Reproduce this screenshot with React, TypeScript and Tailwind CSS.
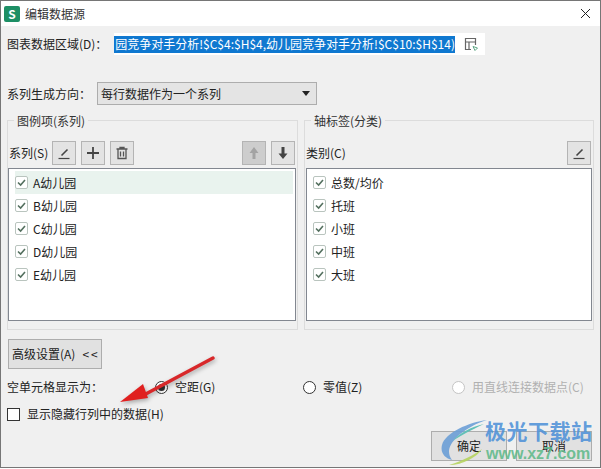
import React from "react";

const font = { fontFamily: '"Noto Sans CJK SC", "Liberation Sans", sans-serif' };

function Pencil() {
  return (
    <svg width="14" height="14" viewBox="0 0 14 14" fill="none" stroke="#444" strokeWidth="1.2">
      <path d="M1.5 12.5h11" />
      <path d="M4.5 9.5 10.5 3.5" strokeWidth="1.6" />
    </svg>
  );
}

function ToolButton({ children, disabled }: { children: React.ReactNode; disabled?: boolean }) {
  return (
    <div className={`flex h-6 w-6 items-center justify-center border border-[#b4b4b4] ${disabled ? "bg-[#cdcdcd]" : "bg-[#e3e3e3]"}`}>
      {children}
    </div>
  );
}

function CheckRow({ label, active }: { label: string; active?: boolean }) {
  return (
    <div className={`ml-[6px] mr-[2px] flex h-[23px] items-center gap-[5px] text-[12px] text-[#222] ${active ? "bg-[#e9f3ee]" : ""}`}>
      <span className="flex h-[13px] w-[13px] items-center justify-center rounded-[2px] border border-[#b9c4be] bg-white">
        <svg width="11" height="11" viewBox="0 0 11 11" fill="none" stroke="#54705f" strokeWidth="1.6">
          <path d="M2 5.5 4.6 8 9 3" />
        </svg>
      </span>
      <span>{label}</span>
    </div>
  );
}

function Radio({ checked, disabled }: { checked?: boolean; disabled?: boolean }) {
  return (
    <span className={`flex h-[13px] w-[13px] items-center justify-center rounded-full border bg-white ${disabled ? "border-[#c4c4c4]" : "border-[#333]"}`}>
      {checked && <span className="h-[7px] w-[7px] rounded-full bg-[#333]" />}
    </span>
  );
}

function Legend({ children }: { children: React.ReactNode }) {
  return (
    <span className="absolute left-[6px] top-[-9px] bg-[#f0f0f0] px-[3px] text-[12px] leading-[17px] text-[#333]">{children}</span>
  );
}

export default function App() {
  return (
    <div style={font} className="relative flex h-[468px] w-[601px] flex-col overflow-hidden border border-[#767676] bg-[#f0f0f0] text-[12px] text-[#222]">
      <div className="flex h-[25px] shrink-0 items-center justify-between bg-white pl-[3px] pr-[9px]">
        <div className="flex items-center gap-[5px]">
          <span className="flex h-4 w-4 items-center justify-center rounded-[2px] bg-[#1d8f65] text-[12px] font-bold leading-none text-white">S</span>
          <span className="text-[12px] text-[#333]">编辑数据源</span>
        </div>
        <svg width="11" height="11" viewBox="0 0 11 11" fill="none" stroke="#222" strokeWidth="1">
          <path d="M1 1l9 9M10 1l-9 9" />
        </svg>
      </div>

      <div className="mt-[7px] flex h-[22px] items-center pl-[6px]">
        <span className="w-[107px] shrink-0 text-[12px]">图表数据区域(D)：</span>
        <div className="flex h-[22px] w-[371px] items-center overflow-hidden bg-white">
          <div className="flex h-[17px] w-[341px] shrink-0 items-center justify-end overflow-hidden whitespace-nowrap bg-[#0f78d0] text-[12px] leading-none text-white">
            园竞争对手分析!$C$4:$H$4,幼儿园竞争对手分析!$C$10:$H$14)
          </div>
          <svg className="ml-[9px]" width="15" height="15" viewBox="0 0 15 15" fill="none" stroke="#666" strokeWidth="1.2">
            <path d="M11.5 8V1.5h-10v11H7" />
            <path d="M1.5 5h10M5 5v7.5" />
            <path d="M9 9.5l4.5 1.5-2.5 2.5z" stroke="#4f9d78" strokeWidth="0.9" />
          </svg>
        </div>
      </div>

      <div className="mt-[27px] flex h-[23px] items-center pl-[6px]">
        <span className="w-[90px] shrink-0 text-[12px]">系列生成方向：</span>
        <div className="flex h-[23px] w-[220px] items-center justify-between border border-[#adadad] bg-[#e4e4e4] pl-[3px] pr-[6px]">
          <span className="text-[12px]">每行数据作为一个系列</span>
          <svg width="8" height="5" viewBox="0 0 8 5"><path d="M0 0h8L4 5z" fill="#222" /></svg>
        </div>
      </div>

      <div className="ml-[6px] mt-[15px] flex h-[210px] w-[587px] gap-[6px]">
        <div className="relative h-full w-[291px] border border-[#dcdcdc]">
          <Legend>图例项(系列)</Legend>
          <div className="mt-[20px] flex h-[24px] items-center justify-between pl-[1px] pr-[2px]">
            <div className="flex items-center">
              <span className="w-[43px] text-[12px]">系列(S)</span>
              <div className="flex gap-[5px]">
                <ToolButton><Pencil /></ToolButton>
                <ToolButton>
                  <svg width="14" height="14" viewBox="0 0 14 14" stroke="#444" strokeWidth="1.8"><path d="M7 1v12M1 7h12" /></svg>
                </ToolButton>
                <ToolButton>
                  <svg width="14" height="14" viewBox="0 0 14 14" fill="none" stroke="#555" strokeWidth="1.3">
                    <path d="M1.5 3h11M5 3V1.5h4V3M3 3v9.5h8V3M5.5 5.5v5M8.5 5.5v5" />
                  </svg>
                </ToolButton>
              </div>
            </div>
            <div className="flex gap-[5px]">
              <ToolButton disabled>
                <svg width="12" height="14" viewBox="0 0 12 14" fill="#a3a3a3"><path d="M6 1 10.5 7H7.5v6h-3V7H1.5z" /></svg>
              </ToolButton>
              <ToolButton>
                <svg width="12" height="14" viewBox="0 0 12 14" fill="#444"><path d="M6 13 1.5 7.5h3V1h3v6.5h3z" /></svg>
              </ToolButton>
            </div>
          </div>
          <div className="mr-[1px] mt-[3px] h-[153px] border border-[#828790] bg-white pt-[2px]">
            <CheckRow label="A幼儿园" active />
            <CheckRow label="B幼儿园" />
            <CheckRow label="C幼儿园" />
            <CheckRow label="D幼儿园" />
            <CheckRow label="E幼儿园" />
          </div>
        </div>

        <div className="relative h-full w-[290px] border border-[#dcdcdc]">
          <Legend>轴标签(分类)</Legend>
          <div className="mt-[20px] flex h-[24px] items-center justify-between pl-[1px] pr-[2px]">
            <span className="text-[12px]">类别(C)</span>
            <ToolButton><Pencil /></ToolButton>
          </div>
          <div className="ml-[1px] mr-[1px] mt-[3px] h-[153px] border border-[#828790] bg-white pt-[2px]">
            <CheckRow label="总数/均价" />
            <CheckRow label="托班" />
            <CheckRow label="小班" />
            <CheckRow label="中班" />
            <CheckRow label="大班" />
          </div>
        </div>
      </div>

      <div className="ml-[7px] mt-[9px] flex h-[30px] w-[94px] items-center gap-[7px] border border-[#adadad] bg-[#e1e1e1] pl-[3px] text-[12px]">
        <span>高级设置(A)</span>
        <span className="tracking-[2px]">&lt;&lt;</span>
      </div>

      <div className="mt-[9px] flex h-[18px] items-center pl-[6px]">
        <span className="w-[148px] text-[12px]">空单元格显示为：</span>
        <div className="flex w-[148px] items-center gap-[7px]"><Radio checked /><span>空距(G)</span></div>
        <div className="flex w-[149px] items-center gap-[7px]"><Radio /><span>零值(Z)</span></div>
        <div className="flex items-center gap-[7px] text-[#b0b0b0]"><Radio disabled /><span>用直线连接数据点(C)</span></div>
      </div>

      <div className="mt-[9px] flex h-[18px] items-center gap-[7px] pl-[6px]">
        <span className="h-[13px] w-[13px] border border-[#333] bg-white" />
        <span className="text-[12px]">显示隐藏行列中的数据(H)</span>
      </div>

      <div className="mt-[8px] flex justify-end gap-[9px] pr-[8px]">
        <div className="flex h-[30px] w-[76px] items-center justify-center border border-[#adadad] bg-[#e1e1e1] text-[12px]">确定</div>
        <div className="flex h-[30px] w-[76px] items-center justify-center border border-[#adadad] bg-[#e1e1e1] text-[12px]">取消</div>
      </div>

      {/* red annotation arrow */}
      <svg className="absolute left-[-1px] top-[-1px] drop-shadow-[1px_2px_2px_rgba(0,0,0,0.3)]" width="601" height="469" fill="none">
        <path d="M213 358 142 396" stroke="#d8282a" strokeWidth="3.4" strokeLinecap="round" />
        <path d="M120 402 143 384 148 398z" fill="#e0201f" />
      </svg>

      {/* watermark */}
      <svg className="absolute left-[440px] top-[418px]" width="60" height="50" viewBox="0 0 60 50" fill="none">
        <path d="M46 1C28 3 4 14 1 26c-2 8 3 13 10 15C6 34 7 27 16 18 24 10 36 4 46 1z" fill="#6b9fd6" opacity="0.9" />
        <path d="M43 5C30 8 18 14 12 22c5-4 18-11 31-17z" fill="#62c0b8" />
        <path d="M8 46c14 0 28-8 33-16-8 6-20 12-33 16z" fill="#b6d35e" opacity="0.9" />
      </svg>
      <span className="absolute left-[484px] top-[415px] text-[21px] font-bold leading-[28px] tracking-[0.5px] text-[#4f92d8]/90">极光下载站</span>
      <span className="absolute left-[485px] top-[443px] text-[16px] font-bold leading-[20px] text-[#5fb98a]/90" style={{ fontFamily: '"Liberation Sans", sans-serif' }}>www.xz7.com</span>
    </div>
  );
}
